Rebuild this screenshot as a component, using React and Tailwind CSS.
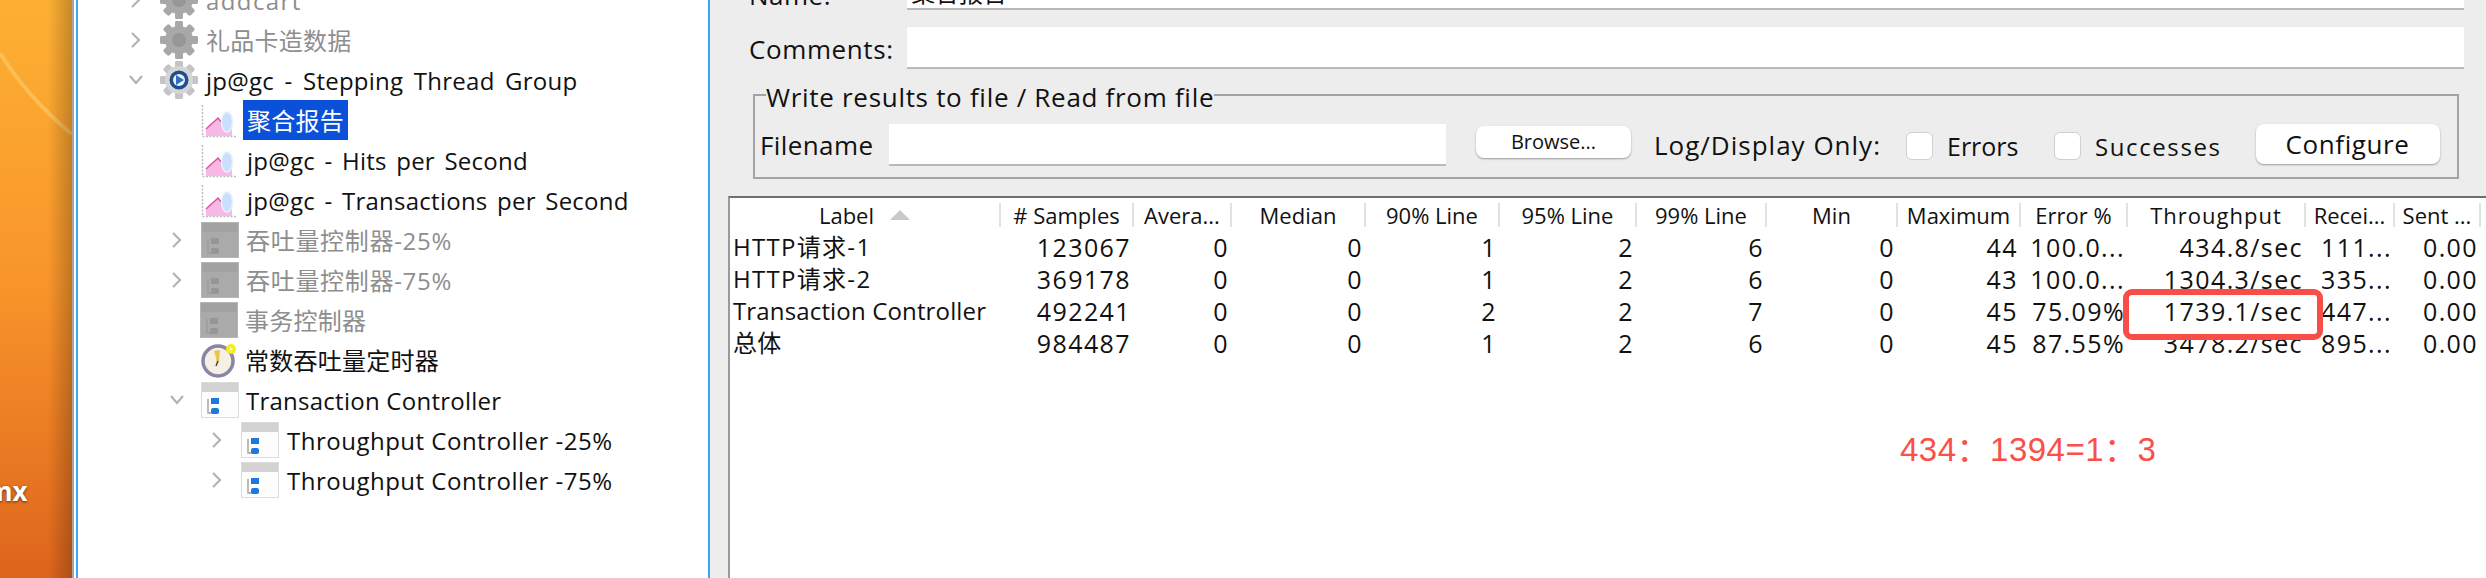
import React from "react";

const latin = "font-['Open_Sans','Noto_Sans_CJK_SC',sans-serif]";

// tick + curve chart used by the listener nodes
const GraphIcon = () => (
  <svg width="38" height="36" viewBox="0 0 38 36" className="shrink-0">
    <path d="M2.5 3V34.5H36" fill="none" stroke="#bdbdbd" strokeWidth="1.5" strokeDasharray="2 1.5" />
    <path d="M6 34V27L18 16L26 26L32 24V34Z" fill="#f8b8e6" />
    <path d="M6 27L18 16L26 26L32 24" fill="none" stroke="#d8539a" strokeWidth="1.5" />
    <ellipse cx="27" cy="20" rx="5.5" ry="10" fill="#c8e0fb" stroke="#e6f1fd" strokeWidth="1.5" />
  </svg>
);

const GearIcon = ({ active }) => {
  const teeth = [0, 45, 90, 135, 180, 225, 270, 315];
  return (
    <svg width="38" height="38" viewBox="0 0 38 38" className="shrink-0">
      {teeth.map((a) => (
        <rect key={a} x="15" y="0" width="8" height="38" rx="2" fill={active ? "#c4c4c4" : "#a8a8a8"} transform={`rotate(${a} 19 19)`} />
      ))}
      <circle cx="19" cy="19" r="14" fill={active ? "#d6d6d6" : "#a8a8a8"} />
      {active ? (
        <>
          <circle cx="19" cy="19" r="9.5" fill="#1d4f8e" />
          <circle cx="19" cy="19" r="6" fill="#e9f1fb" />
          <path d="M16 14L24 19L16 24Z" fill="#2f6fbd" />
        </>
      ) : (
        <circle cx="19" cy="19" r="7" fill="#979797" />
      )}
    </svg>
  );
};

const ControllerIcon = ({ disabled }) => (
  <svg width="38" height="36" viewBox="0 0 38 36" className="shrink-0">
    <rect x="0.5" y="0.5" width="37" height="35" fill={disabled ? "#aaaaaa" : "#fdfdfd"} stroke={disabled ? "#b5b5b5" : "#dcdcdc"} />
    <rect x="1" y="1" width="36" height="9" fill={disabled ? "#a2a2a2" : "#d2d2d2"} />
    <path d="M7 17V31H13" fill="none" stroke={disabled ? "#9c9c9c" : "#a5a5a5"} strokeWidth="1.5" />
    <rect x="10" y="16" width="8" height="6" fill={disabled ? "#969696" : "#1c78dc"} />
    <rect x="10" y="26" width="8" height="6" rx="2" fill={disabled ? "#969696" : "#1c78dc"} />
  </svg>
);

const TimerIcon = () => (
  <svg width="38" height="38" viewBox="0 0 38 38" className="shrink-0">
    <circle cx="18" cy="20" r="15" fill="#f4f1e4" stroke="#8a84a6" strokeWidth="3.5" />
    <path d="M14 10L20 9L19 20L17 24L16 17Z" fill="#e9c64a" />
    <path d="M18 20L16 25" stroke="#4a4a4a" strokeWidth="1.5" />
    <circle cx="31" cy="8" r="5" fill="#f5ee1e" />
    <circle cx="31" cy="8" r="1.5" fill="#fbf9c2" />
  </svg>
);

const Chevron = ({ open }) => (
  <svg width="14" height="18" viewBox="0 0 14 18" className="shrink-0">
    <path d={open ? "M1 5L7 12L13 5" : "M3 2L10 9L3 16"} fill="none" stroke="#b3b3b3" strokeWidth="2.2" />
  </svg>
);

// arrow: null | "open" | "closed", spacing classes written out for Tailwind
const treeRows = [
  { label: "addcart", indent: "pl-[129px]", arrow: "closed", icon: <GearIcon />, gap: "gap-[8px]", muted: true, text: "tracking-[1.4px]" },
  { label: "礼品卡造数据", indent: "pl-[129px]", arrow: "closed", icon: <GearIcon />, gap: "gap-[8px]", muted: true },
  { label: "jp@gc - Stepping Thread Group", indent: "pl-[129px]", arrow: "open", icon: <GearIcon active />, gap: "gap-[8px]", text: "tracking-[0.25px] [word-spacing:4px]" },
  { label: "聚合报告", indent: "pl-[200px]", icon: <GraphIcon />, gap: "gap-[5px]", selected: true },
  { label: "jp@gc - Hits per Second", indent: "pl-[200px]", icon: <GraphIcon />, gap: "gap-[9px]", text: "tracking-[0.25px] [word-spacing:3px]" },
  { label: "jp@gc - Transactions per Second", indent: "pl-[200px]", icon: <GraphIcon />, gap: "gap-[9px]", text: "tracking-[0.25px] [word-spacing:3px]" },
  { label: "吞吐量控制器-25%", indent: "pl-[170px]", arrow: "closed", icon: <ControllerIcon disabled />, gap: "gap-[7px]", muted: true, text: "tracking-[0.7px]" },
  { label: "吞吐量控制器-75%", indent: "pl-[170px]", arrow: "closed", icon: <ControllerIcon disabled />, gap: "gap-[7px]", muted: true, text: "tracking-[0.7px]" },
  { label: "事务控制器", indent: "pl-[200px]", icon: <ControllerIcon disabled />, gap: "gap-[7px]", muted: true },
  { label: "常数吞吐量定时器", indent: "pl-[200px]", icon: <TimerIcon />, gap: "gap-[7px]" },
  { label: "Transaction Controller", indent: "pl-[170px]", arrow: "open", icon: <ControllerIcon />, gap: "gap-[7px]" },
  { label: "Throughput Controller -25%", indent: "pl-[210px]", arrow: "closed", icon: <ControllerIcon />, gap: "gap-[8px]", text: "tracking-[0.5px]" },
  { label: "Throughput Controller -75%", indent: "pl-[210px]", arrow: "closed", icon: <ControllerIcon />, gap: "gap-[8px]", text: "tracking-[0.5px]" },
];

const TreeRow = ({ row }) => (
  <div className={`flex h-[40px] shrink-0 items-center ${row.indent}`}>
    {row.arrow && (
      <div className="flex w-[31px] shrink-0 items-center justify-start">
        <Chevron open={row.arrow === "open"} />
      </div>
    )}
    <div className={`flex items-center ${row.gap}`}>
      {row.icon}
      <span
        className={`flex h-[40px] items-center whitespace-pre pt-[2px] text-[24px] ${row.text || "tracking-[0.25px]"} ${
          row.selected ? "bg-[#0a50d9] px-[4px] text-white" : row.muted ? "text-[#8e8e8e]" : "text-[#111]"
        }`}
      >
        {row.label}
      </span>
    </div>
  </div>
);

const columns = ["Label", "# Samples", "Avera...", "Median", "90% Line", "95% Line", "99% Line", "Min", "Maximum", "Error %", "Throughput", "Recei...", "Sent ..."];

const results = [
  ["HTTP请求-1", "123067", "0", "0", "1", "2", "6", "0", "44", "100.0...", "434.8/sec", "111...", "0.00"],
  ["HTTP请求-2", "369178", "0", "0", "1", "2", "6", "0", "43", "100.0...", "1304.3/sec", "335...", "0.00"],
  ["Transaction Controller", "492241", "0", "0", "2", "2", "7", "0", "45", "75.09%", "1739.1/sec", "447...", "0.00"],
  ["总体", "984487", "0", "0", "1", "2", "6", "0", "45", "87.55%", "3478.2/sec", "895...", "0.00"],
];

const gridCols = "grid-cols-[271px_133px_98px_134px_134px_137px_130px_131px_123px_107px_178px_89px_86px]";

const Field = ({ className, children }) => (
  <div className={`border-b-2 border-b-[#b9b9b9] bg-white ${className}`}>{children}</div>
);

const Check = ({ label, className, textClass }) => (
  <div className={`mt-[2px] flex items-center gap-[14px] ${className}`}>
    <div className="h-[28px] w-[27px] rounded-[6px] border border-[#d0d0d0] bg-white" />
    <span className={`mt-[1px] leading-none ${textClass}`}>{label}</span>
  </div>
);

const Button = ({ children, className }) => (
  <div className={`flex items-center justify-center rounded-[8px] bg-white shadow-[0_1px_2px_rgba(0,0,0,0.35)] ${className}`}>
    {children}
  </div>
);

export default function App() {
  return (
    <div className={`relative flex h-[578px] w-[2486px] overflow-hidden bg-[#ededed] text-[#111] ${latin}`}>
      {/* desktop wallpaper behind the window */}
      <div className="relative h-full w-[72px] shrink-0 overflow-hidden bg-gradient-to-b from-[#fdb033] via-[#f8942a] to-[#dd641c]">
        <svg width="72" height="578" className="absolute left-0 top-0">
          <path d="M0 53C20 85 45 112 72 134" fill="none" stroke="#fcc765" strokeOpacity="0.7" strokeWidth="4" />
        </svg>
        <div className="absolute right-0 top-0 h-full w-[24px] bg-gradient-to-r from-transparent to-[#00000038]" />
        <span className="absolute left-[-13px] top-[472px] text-[26px] font-bold text-white [text-shadow:0_1px_3px_rgba(0,0,0,0.6)]">mx</span>
      </div>
      <div className="w-[2px] shrink-0 bg-[#a5a5a5]" />
      <div className="w-[2px] shrink-0 bg-white" />

      {/* test plan tree */}
      <div className="flex h-full w-[634px] shrink-0 flex-col overflow-hidden border-x-2 border-x-[#3ea6ee] bg-white">
        <div className="-mt-[20px] -ml-[78px] flex flex-col">
          {treeRows.map((row) => (
            <TreeRow key={row.label} row={row} />
          ))}
        </div>
      </div>

      {/* listener panel */}
      <div className="flex h-full min-w-0 flex-1 flex-col">
        <div className="h-[196px] shrink-0">
          <div className="flex h-[10px] items-end overflow-hidden pl-[39px]">
            <span className="mb-[3px] w-[158px] shrink-0 text-[26px] leading-[24px] tracking-[0.5px]">Name:</span>
            <Field className="flex h-[40px] w-[1557px] shrink-0 items-center pl-[4px] pt-[7px] text-[24px]">聚合报告</Field>
          </div>
          <div className="mt-[17px] flex h-[42px] items-center pl-[39px]">
            <span className="w-[158px] shrink-0 pt-[2px] text-[26px] tracking-[0.6px]">Comments:</span>
            <Field className="h-[42px] w-[1557px] shrink-0" />
          </div>
          <fieldset className="ml-[43px] mt-[14px] h-[96px] w-[1706px] border-2 border-[#a3a3a3] px-[5px]">
            <legend className="ml-[6px] h-[24px] text-[26px] leading-[28px] tracking-[0.7px]">Write results to file / Read from file</legend>
            <div className="mt-[17px] flex h-[42px] items-center">
              <span className="w-[129px] shrink-0 text-[26px] tracking-[0.4px]">Filename</span>
              <Field className="h-[42px] w-[557px] shrink-0" />
              <Button className="-mt-[6px] ml-[30px] h-[32px] w-[155px] shrink-0 text-[20px]">Browse...</Button>
              <span className="ml-[23px] w-[227px] shrink-0 whitespace-nowrap text-[26px] tracking-[1px]">Log/Display Only:</span>
              <Check label="Errors" textClass="text-[25px]" className="ml-[25px] w-[148px] shrink-0" />
              <Check label="Successes" textClass="text-[24px] tracking-[1.6px]" className="shrink-0" />
              <Button className="-mt-[2px] ml-[34px] h-[40px] w-[184px] shrink-0 text-[26px] tracking-[0.6px]">Configure</Button>
            </div>
          </fieldset>
        </div>

        {/* results table */}
        <div className="ml-[18px] flex min-h-0 flex-1 flex-col border-l-2 border-t-2 border-l-[#9a9a9a] border-t-[#6f6f6f] bg-white">
          <div className={`mt-[5px] grid h-[24px] ${gridCols}`}>
            {columns.map((c, i) => (
              <div key={c} className={`flex items-center justify-center whitespace-nowrap border-r-2 border-r-[#e2e2e2] text-[22px] leading-none ${c === "Throughput" ? "tracking-[1px]" : ""}`}>
                {c}
                {i === 0 && (
                  <svg width="20" height="10" viewBox="0 0 20 10" className="ml-[16px]">
                    <path d="M10 0L20 10H0Z" fill="#c9c9c9" />
                  </svg>
                )}
              </div>
            ))}
          </div>
          <div className="mt-[4px]">
            {results.map((row) => (
              <div key={row[0]} className={`grid h-[32px] items-center ${gridCols}`}>
                {row.map((cell, i) => (
                  <div
                    key={i}
                    className={`whitespace-nowrap leading-none ${
                      i === 0
                        ? `pl-[3px] text-[24px] ${cell.startsWith("HTTP") ? "tracking-[1.3px]" : "tracking-[0.15px]"}`
                        : "pr-[3px] text-right text-[25px] tracking-[1.4px]"
                    }`}
                  >
                    {cell}
                  </div>
                ))}
              </div>
            ))}
          </div>
        </div>
      </div>

      {/* annotations drawn on top of the screenshot */}
      <div className="absolute left-[2123px] top-[289px] h-[51px] w-[200px] rounded-[9px] border-[6px] border-[#f94d47]" />
      <div className="absolute left-[1900px] top-[431px] whitespace-nowrap font-['Liberation_Sans','Noto_Sans_CJK_SC',sans-serif] text-[33px] leading-[38px] tracking-[0.5px] text-[#fb4f49]">
        434：1394=1：3
      </div>
    </div>
  );
}
